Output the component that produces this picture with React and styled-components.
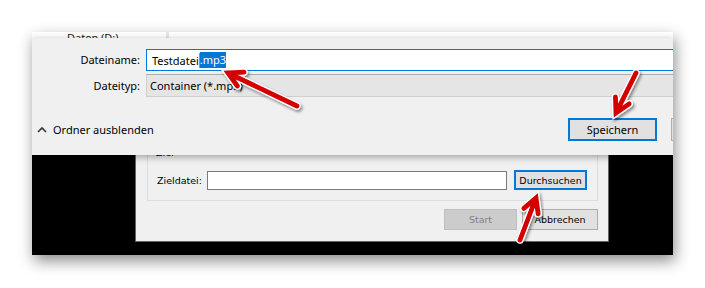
import styled, { createGlobalStyle } from 'styled-components';

const GlobalStyle = createGlobalStyle`
  html, body {
    margin: 0;
    background: #fff;
  }
  body {
    width: 705px;
    height: 288px;
    overflow: hidden;
  }
`;

const Page = styled.div`
  position: relative;
  width: 705px;
  height: 288px;
  padding: 32px 0 0 32px;
  box-sizing: border-box;
`;

const Shot = styled.div`
  width: 641px;
  height: 223px;
  display: flex;
  flex-direction: column;
  overflow: hidden;
  box-shadow: 2px 6px 14px rgba(0, 0, 0, 0.45);
  font-family: 'Noto Sans', 'Open Sans', sans-serif;
  color: #000;
`;

const TopStrip = styled.div`
  height: 6px;
  flex-shrink: 0;
  display: flex;
  background: #fff;
  overflow: hidden;
`;

const DriveCell = styled.div`
  width: 134px;
  box-sizing: border-box;
  padding-left: 35px;
  margin-top: -1px;
  font-size: 11px;
  line-height: 14px;
  color: #1a1a1a;
`;

const Splitter = styled.div`
  width: 3px;
  background: #e6e6e6;
`;

const SaveDialog = styled.div`
  position: relative;
  z-index: 1;
  height: 117px;
  flex-shrink: 0;
  box-sizing: border-box;
  padding-top: 11px;
  background: #f0f0f0;
  box-shadow: 0 2px 7px rgba(0, 0, 0, 0.35);
  display: flex;
  flex-direction: column;
  font-size: 11px;
`;

const Fields = styled.div`
  display: grid;
  grid-template-columns: 108px 1fr;
  column-gap: 6px;
  row-gap: 3px;
  margin-right: -4px;
`;

const FieldLabel = styled.div`
  align-self: center;
  text-align: right;
  line-height: 16px;
`;

const NameInput = styled.div`
  height: 22px;
  box-sizing: border-box;
  border: 1px solid #0078d7;
  background: #fff;
  display: flex;
  align-items: center;
  padding-left: 5px;
`;

const Caret = styled.span`
  width: 1px;
  height: 15px;
  background: #f07d1a;
`;

const Selection = styled.span`
  background: #0078d7;
  color: #fff;
  line-height: 16px;
`;

const TypeBox = styled.div`
  height: 23px;
  box-sizing: border-box;
  border: 1px solid #cfcfcf;
  border-top-color: #acacac;
  background: #e5e5e5;
  display: flex;
  align-items: center;
  padding-left: 3px;
`;

const Footer = styled.div`
  display: flex;
  align-items: center;
  margin-top: 21px;
  padding-left: 5px;
`;

const Toggle = styled.div`
  display: flex;
  align-items: center;
  gap: 6px;
`;

const Spacer = styled.div`
  flex: 1;
`;

const DialogButton = styled.div`
  flex-shrink: 0;
  width: ${(p) => p.$w}px;
  height: ${(p) => p.$h}px;
  box-sizing: border-box;
  display: flex;
  align-items: center;
  justify-content: center;
  background: ${(p) => (p.$disabled ? '#cccccc' : '#e1e1e1')};
  border: ${(p) =>
    p.$focus ? '2px solid #0078d7' : `1px solid ${p.$disabled ? '#bfbfbf' : '#adadad'}`};
  color: ${(p) => (p.$disabled ? '#838383' : '#000')};
`;

const HiddenButton = styled(DialogButton)`
  margin-left: 14px;
  margin-right: -87px;
`;

const BlackArea = styled.div`
  flex: 1;
  background: #000;
  padding-left: 103px;
`;

const VlcDialog = styled.div`
  width: 474px;
  height: 87px;
  box-sizing: border-box;
  border: 1px solid #646464;
  border-top: none;
  background: #f0f0f0;
  padding: 0 10px 0 11px;
  overflow: hidden;
  font-family: 'DejaVu Sans', Tahoma, sans-serif;
  font-size: 9.5px;
`;

const Group = styled.fieldset`
  margin: -8px 0 0 0;
  padding: 4px 9px 10px 9px;
  height: 54px;
  box-sizing: border-box;
  border: 1px solid #dcdcdc;
  display: flex;
  align-items: flex-end;
`;

const Legend = styled.legend`
  margin-left: -3px;
  padding: 0 2px;
  line-height: 12px;
`;

const TargetRow = styled.div`
  display: flex;
  align-items: center;
  gap: 7px;
`;

const TargetLabel = styled.span`
  width: 43px;
`;

const TargetInput = styled.div`
  width: 300px;
  height: 19px;
  box-sizing: border-box;
  border: 1px solid #7a7a7a;
  background: #fff;
`;

const ButtonRow = styled.div`
  display: flex;
  justify-content: flex-end;
  gap: 5px;
  margin-top: 8px;
`;

const Overlay = styled.svg`
  position: absolute;
  z-index: 2;
  left: 0;
  top: 0;
  pointer-events: none;
`;

function arrowPath([x1, y1], [x2, y2], len = 16, spread = 0.5) {
  const a = Math.atan2(y1 - y2, x1 - x2);
  const l = [x2 + len * Math.cos(a + spread), y2 + len * Math.sin(a + spread)];
  const r = [x2 + len * Math.cos(a - spread), y2 + len * Math.sin(a - spread)];
  return `M${x1} ${y1} L${x2} ${y2} M${l[0]} ${l[1]} L${x2} ${y2} L${r[0]} ${r[1]}`;
}

const arrows = [
  { from: [297, 106], to: [228, 73] },
  { from: [636, 73], to: [616, 113] },
  { from: [520, 240], to: [536, 198] },
];

function Arrow({ from, to }) {
  const d = arrowPath(from, to);
  return (
    <g filter="url(#arrowShadow)">
      <path d={d} fill="none" stroke="#fff" strokeWidth="7.5" strokeLinecap="round" strokeLinejoin="miter" />
      <path d={d} fill="none" stroke="#d40000" strokeWidth="4.8" strokeLinecap="round" strokeLinejoin="miter" />
    </g>
  );
}

function Chevron() {
  return (
    <svg width="10" height="7" viewBox="0 0 10 7">
      <path d="M1 6 L5 2 L9 6" fill="none" stroke="#333" strokeWidth="1.6" />
    </svg>
  );
}

export default function App() {
  return (
    <Page>
      <GlobalStyle />
      <Shot>
        <TopStrip>
          <DriveCell>Daten (D:)</DriveCell>
          <Splitter />
        </TopStrip>

        <SaveDialog>
          <Fields>
            <FieldLabel>Dateiname:</FieldLabel>
            <NameInput>
              Testdatei
              <Caret />
              <Selection>.mp3</Selection>
            </NameInput>
            <FieldLabel>Dateityp:</FieldLabel>
            <TypeBox>Container (*.mp3)</TypeBox>
          </Fields>

          <Footer>
            <Toggle>
              <Chevron />
              Ordner ausblenden
            </Toggle>
            <Spacer />
            <DialogButton $w={89} $h={23} $focus>
              Speichern
            </DialogButton>
            <HiddenButton $w={89} $h={23} />
          </Footer>
        </SaveDialog>

        <BlackArea>
          <VlcDialog>
            <Group>
              <Legend>Ziel</Legend>
              <TargetRow>
                <TargetLabel>Zieldatei:</TargetLabel>
                <TargetInput />
                <DialogButton $w={73} $h={20} $focus>
                  Durchsuchen
                </DialogButton>
              </TargetRow>
            </Group>
            <ButtonRow>
              <DialogButton $w={73} $h={21} $disabled>
                Start
              </DialogButton>
              <DialogButton $w={76} $h={21}>
                Abbrechen
              </DialogButton>
            </ButtonRow>
          </VlcDialog>
        </BlackArea>
      </Shot>

      <Overlay width="705" height="288" viewBox="0 0 705 288">
        <defs>
          <filter id="arrowShadow" x="-30%" y="-30%" width="160%" height="160%">
            <feDropShadow dx="1.5" dy="2" stdDeviation="1.5" floodColor="#000" floodOpacity="0.45" />
          </filter>
        </defs>
        {arrows.map((a, i) => (
          <Arrow key={i} from={a.from} to={a.to} />
        ))}
      </Overlay>
    </Page>
  );
}
